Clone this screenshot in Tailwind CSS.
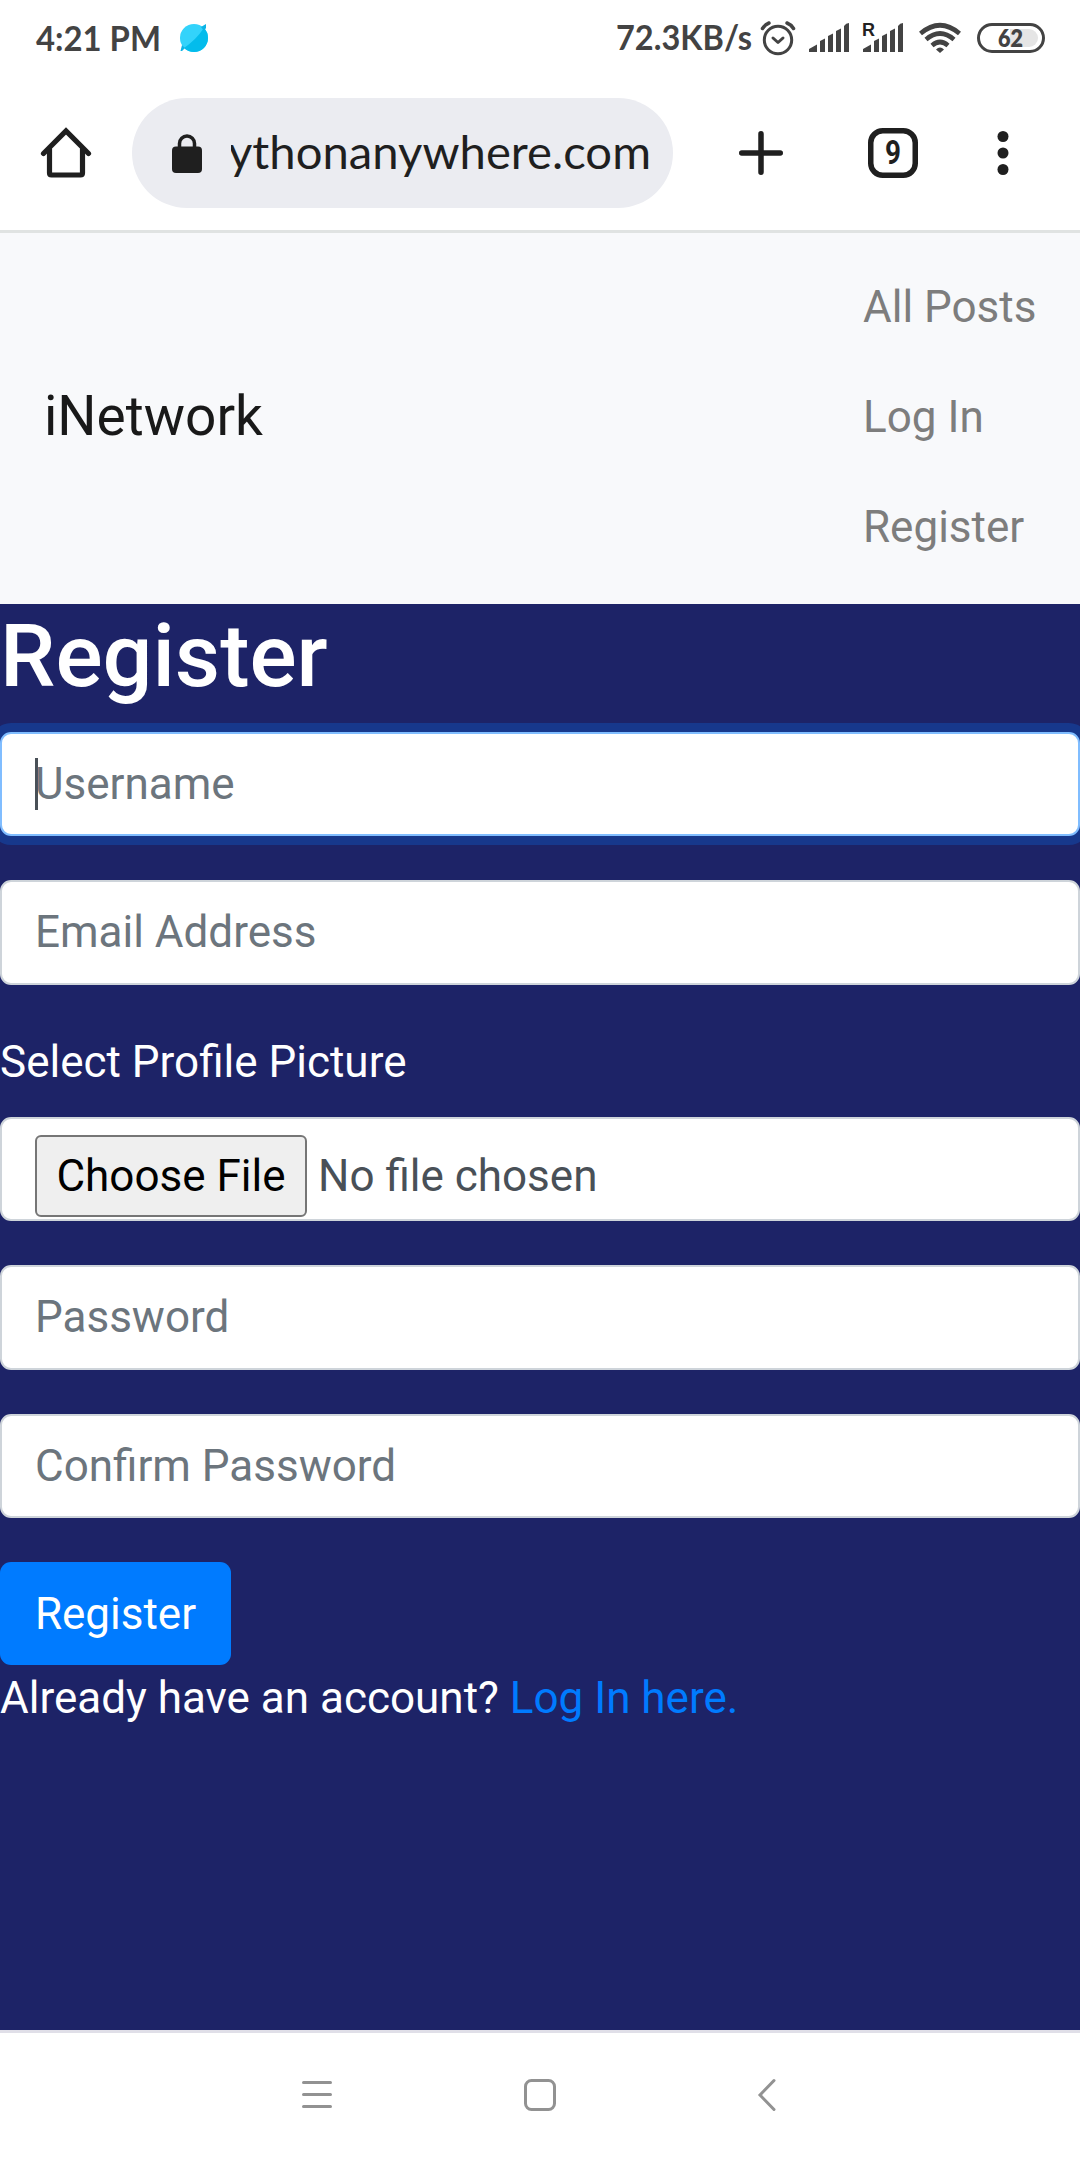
<!DOCTYPE html>
<html lang="en">
<head>
<meta charset="utf-8">
<title>iNetwork</title>
<script src="https://cdn.jsdelivr.net/npm/@tailwindcss/browser@4"></script>
</head>
<body class="flex h-[2160px] w-[1080px] flex-col overflow-hidden bg-[#1d2367] font-['Roboto',sans-serif] text-[44px] leading-[66px] text-white">

<!-- Status bar -->
<div class="flex h-[76px] shrink-0 bg-white">
  <svg class="block" width="1080" height="76" viewBox="0 0 1080 76" fill="#434343">
    <g font-family="Lato, sans-serif" font-weight="700" font-size="34.500">
      <text x="36" y="51" textLength="125" lengthAdjust="spacingAndGlyphs">4:21 PM</text>
      <text x="616" y="50" textLength="136" lengthAdjust="spacingAndGlyphs">72.3KB/s</text>
    </g>
    <circle cx="194" cy="38" r="14" fill="#33d3fb"/>
    <path d="M203.900 28.100A14 14 0 0 1 184.100 47.900Q196 40 203.900 28.100Z" fill="#03bcec"/>
    <path d="M201 27l5-3v4l-2 3zM182 45l3 3-3 3h-1.500z" fill="#0cb4e6"/>
    <g fill="none" stroke="#434343" stroke-width="3" stroke-linecap="round" stroke-linejoin="round">
      <circle cx="778" cy="40" r="13.700"/>
      <path d="M773 38l5 4.500 5-4.500"/>
      <path d="M762.500 28.500q2.500-4 6.500-5.500M787 23q4 1.500 6.500 5.500" stroke-width="3.500"/>
    </g>
    <path d="M809 52v-3l8-4.500v7.500zM820 52V41l5-2.500V52zM828 52V36l5-2.500V52zM836 52V31l5-2.500V52zM844 52V26q2-3 5-3V52z"/>
    <path d="M863 52v-3l8-4.500v7.500zM874 52V41l5-2.500V52zM882 52V36l5-2.500V52zM890 52V31l5-2.500V52zM898 52V26q2-3 5-3V52z"/>
    <text x="862" y="36" font-family="Liberation Sans, sans-serif" font-weight="700" font-size="18" textLength="13" lengthAdjust="spacingAndGlyphs" fill="#222">R</text>
    <g fill="none" stroke="#434343" stroke-width="4.600">
      <path d="M920.500 33.500Q940 17 959.500 33.500"/>
      <path d="M926 39.500Q940 27.500 954 39.500"/>
      <path d="M932 45.500Q940 38.500 948 45.500"/>
    </g>
    <path d="M936 49.500Q940 45.500 944 49.500L940 53z"/>
    <path d="M1010 29h19a9 9 0 0 1 0 18h-19z" fill="#e5e5e5"/>
    <rect x="978.500" y="24.500" width="65" height="27" rx="13.500" fill="none" stroke="#434343" stroke-width="3"/>
    <text x="998" y="46.500" font-family="Lato, sans-serif" font-weight="800" font-size="23.500" textLength="25" lengthAdjust="spacingAndGlyphs">62</text>
  </svg>
</div>

<!-- Browser toolbar -->
<div class="flex h-[154px] shrink-0 items-center bg-white">
  <svg class="ml-10 block" width="52" height="54" viewBox="40 126 52 54" fill="none" stroke="#1f1f1f" stroke-width="5.200" stroke-linejoin="round" stroke-linecap="round">
    <path d="M43.500 153.500L66 131l22.500 22.500" stroke-linejoin="miter"/>
    <path d="M49.500 149v24q0 2 2 2h29q2 0 2-2v-24"/>
  </svg>
  <div class="ml-10 flex h-[110px] w-[541px] items-center rounded-full bg-[#ebecf1]">
    <svg class="ml-10 block" width="30" height="40" viewBox="172 132 30 40">
      <rect x="172" y="145.500" width="30" height="26.500" rx="4" fill="#1f1f1f"/>
      <path d="M179.500 147v-4.500a7.500 7.500 0 0 1 15 0v4.500" fill="none" stroke="#1f1f1f" stroke-width="3.500"/>
    </svg>
    <svg class="ml-[29px] block" width="420" height="70" viewBox="231 118 420 70">
      <text x="228" y="169" font-family="Lato, sans-serif" font-weight="400" font-size="47" fill="#1f1f1f" textLength="423" lengthAdjust="spacingAndGlyphs">ythonanywhere.com</text>
    </svg>
  </div>
  <svg class="ml-[66px] block" width="44" height="44" viewBox="0 0 44 44" stroke="#1f1f1f" stroke-width="5.500" stroke-linecap="round"><path d="M22 2.750v38.500M2.750 22h38.500"/></svg>
  <svg class="ml-[85px] block" width="50" height="50" viewBox="0 0 50 50">
    <rect x="2.750" y="2.750" width="44.500" height="44.500" rx="12" fill="none" stroke="#1f1f1f" stroke-width="5.500"/>
    <text x="17" y="35.500" font-family="Roboto, sans-serif" font-weight="700" font-size="33" fill="#1f1f1f" textLength="16" lengthAdjust="spacingAndGlyphs">9</text>
  </svg>
  <svg class="ml-[79px] block" width="12" height="44" viewBox="0 0 12 44" fill="#1f1f1f"><circle cx="6" cy="5.500" r="5.500"/><circle cx="6" cy="22" r="5.500"/><circle cx="6" cy="38.500" r="5.500"/></svg>
</div>

<!-- Site navigation -->
<nav class="flex h-[374px] shrink-0 items-center justify-between border-t-[3px] border-[#e0e3e2] bg-[#f8f9fb] pt-[19px] pr-11 pb-[22px] pl-11">
  <a class="pb-0.5 text-[55px] leading-[82px] text-[#191919]">iNetwork</a>
  <ul class="w-[173px] whitespace-nowrap text-[#7d7d7d]">
    <li class="flex h-[110px] items-center">All Posts</li>
    <li class="flex h-[110px] items-center">Log In</li>
    <li class="flex h-[110px] items-center">Register</li>
  </ul>
</nav>

<!-- Registration form -->
<main class="flex min-h-0 grow flex-col items-start">
  <h1 class="mb-6 text-[88px] leading-[104px] font-medium">Register</h1>
  <div class="mb-11 flex h-[104px] w-full shrink-0 items-center rounded-[11px] border-2 border-[#80bdff] bg-white pl-[33px] text-[#6c757d] shadow-[0_0_0_9px_#17388c]">
    <span class="-mr-[3px] h-[52px] w-[3px] bg-[#495057]"></span><span>Username</span>
  </div>
  <div class="mb-11 flex h-[105px] w-full shrink-0 items-center rounded-[11px] border-2 border-[#ced4da] bg-white pb-px pl-[33px] text-[#6c757d]">Email Address</div>
  <label class="mb-[22px]">Select Profile Picture</label>
  <div class="mb-11 flex h-[104px] w-full shrink-0 items-start rounded-[11px] border-2 border-[#ced4da] bg-white pt-4 pl-[33px]">
    <span class="flex h-[82px] w-[272px] items-center justify-center rounded-[6px] border-2 border-[#767676] bg-[#efefef] text-black">Choose File</span>
    <span class="ml-[11px] leading-[82px] text-[#495057]">No file chosen</span>
  </div>
  <div class="mb-11 flex h-[105px] w-full shrink-0 items-center rounded-[11px] border-2 border-[#ced4da] bg-white pb-px pl-[33px] text-[#6c757d]">Password</div>
  <div class="mb-11 flex h-[104px] w-full shrink-0 items-center rounded-[11px] border-2 border-[#ced4da] bg-white pl-[33px] text-[#6c757d]">Confirm Password</div>
  <div class="flex h-[103px] w-[231px] shrink-0 items-center justify-center rounded-[11px] bg-[#007bff]">Register</div>
  <p>Already have an account? <a class="text-[#007bff]">Log In here.</a></p>
</main>

<!-- System navigation -->
<div class="flex h-[130px] shrink-0 justify-center border-t-[3px] border-[#e0dfe8] bg-white">
  <svg class="block" width="1080" height="127" viewBox="0 2033 1080 127" fill="none" stroke="#929292" stroke-width="3" stroke-linecap="round">
    <path d="M303.500 2082.500h27M303.500 2094.500h27M303.500 2106.500h27"/>
    <rect x="525.500" y="2080.500" width="29" height="29" rx="6"/>
    <path d="M774 2080.500L760 2095l14 14.500"/>
  </svg>
</div>
</body>
</html>
